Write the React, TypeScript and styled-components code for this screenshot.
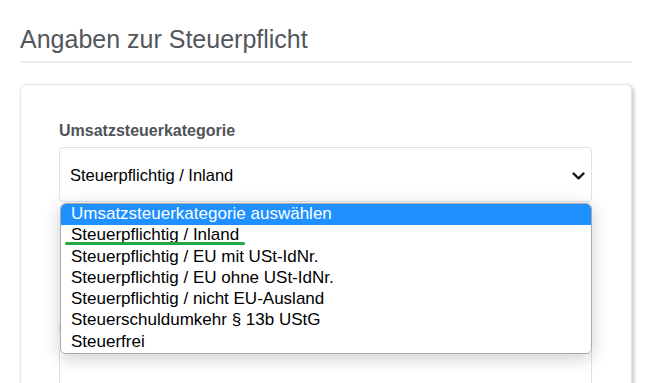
import styled, { createGlobalStyle } from "styled-components";

const options = [
  "Umsatzsteuerkategorie auswählen",
  "Steuerpflichtig / Inland",
  "Steuerpflichtig / EU mit USt-IdNr.",
  "Steuerpflichtig / EU ohne USt-IdNr.",
  "Steuerpflichtig / nicht EU-Ausland",
  "Steuerschuldumkehr § 13b UStG",
  "Steuerfrei",
];

export default function App() {
  return (
    <Page>
      <GlobalStyle />
      <Title>Angaben zur Steuerpflicht</Title>
      <Card>
        <Field>
          <Label>Umsatzsteuerkategorie</Label>
          <SelectWrap>
            <SelectBox>
              <span>Steuerpflichtig / Inland</span>
              <svg width="13" height="8" viewBox="0 0 13 8">
                <path
                  d="M1.5 1.5 L6.5 6.3 L11.5 1.5"
                  fill="none"
                  stroke="#111"
                  strokeWidth="2.3"
                  strokeLinecap="round"
                  strokeLinejoin="round"
                />
              </svg>
            </SelectBox>
            <Dropdown>
              {options.map((o, i) => (
                <Option key={o} $active={i === 0}>
                  {o}
                </Option>
              ))}
              <Marker />
            </Dropdown>
          </SelectWrap>
        </Field>
        <Field $top={119}>
          <Label>Umsatzsteuer-IdNr.</Label>
          <Input />
        </Field>
      </Card>
    </Page>
  );
}

const GlobalStyle = createGlobalStyle`
  html, body {
    margin: 0;
    padding: 0;
    background: #ffffff;
    overflow: hidden;
  }
  body {
    font-family: "Liberation Sans", Arial, sans-serif;
  }
`;

const Page = styled.div`
  width: 649px;
  height: 383px;
  box-sizing: border-box;
  padding: 24px 17px 0 20px;
  overflow: hidden;
`;

const Title = styled.h2`
  margin: 0;
  font-size: 25px;
  line-height: 30px;
  font-weight: 400;
  color: #53575c;
  padding-bottom: 7px;
  border-bottom: 2px solid #e9eded;
`;

const Card = styled.div`
  margin-top: 21px;
  border: 1px solid #e4e7e7;
  border-radius: 6px;
  box-shadow: 2px 2px 4px rgba(0, 0, 0, 0.22);
  padding: 36px 39px 80px 38px;
  background: #fff;
`;

const Field = styled.div<{ $top?: number }>`
  display: flex;
  flex-direction: column;
  gap: 6px;
  margin-top: ${(p) => p.$top ?? 0}px;
`;

const Label = styled.label`
  font-size: 16px;
  line-height: 20px;
  font-weight: 700;
  color: #505459;
`;

const SelectWrap = styled.div`
  position: relative;
`;

const SelectBox = styled.div`
  height: 55px;
  box-sizing: border-box;
  border: 1px solid #dde3e3;
  border-radius: 4px;
  padding: 2px 5px 0 10px;
  display: flex;
  align-items: center;
  justify-content: space-between;
  font-size: 16.5px;
  color: #000;
  background: #fff;

  svg {
    margin-right: 1px;
  }
`;

const Dropdown = styled.div`
  position: absolute;
  top: calc(100% + 1px);
  left: 1px;
  right: 0;
  background: #fff;
  border: 1px solid #a9a9a9;
  border-radius: 6px;
  overflow: hidden;
  box-shadow: 0 4px 18px rgba(0, 0, 0, 0.2);
  z-index: 2;
`;

const Option = styled.div<{ $active?: boolean }>`
  height: 21.3px;
  line-height: 20px;
  padding-left: 10px;
  font-size: 17px;
  white-space: nowrap;
  color: ${(p) => (p.$active ? "#fff" : "#000")};
  background: ${(p) => (p.$active ? "#1e90ff" : "#fff")};
`;

const Marker = styled.span`
  position: absolute;
  left: 4px;
  top: 37.5px;
  width: 180px;
  height: 3px;
  border-radius: 2px;
  background: #22a646;
`;

const Input = styled.div`
  height: 55px;
  border: 1px solid #dde3e3;
  border-radius: 4px;
  background: #fff;
`;
